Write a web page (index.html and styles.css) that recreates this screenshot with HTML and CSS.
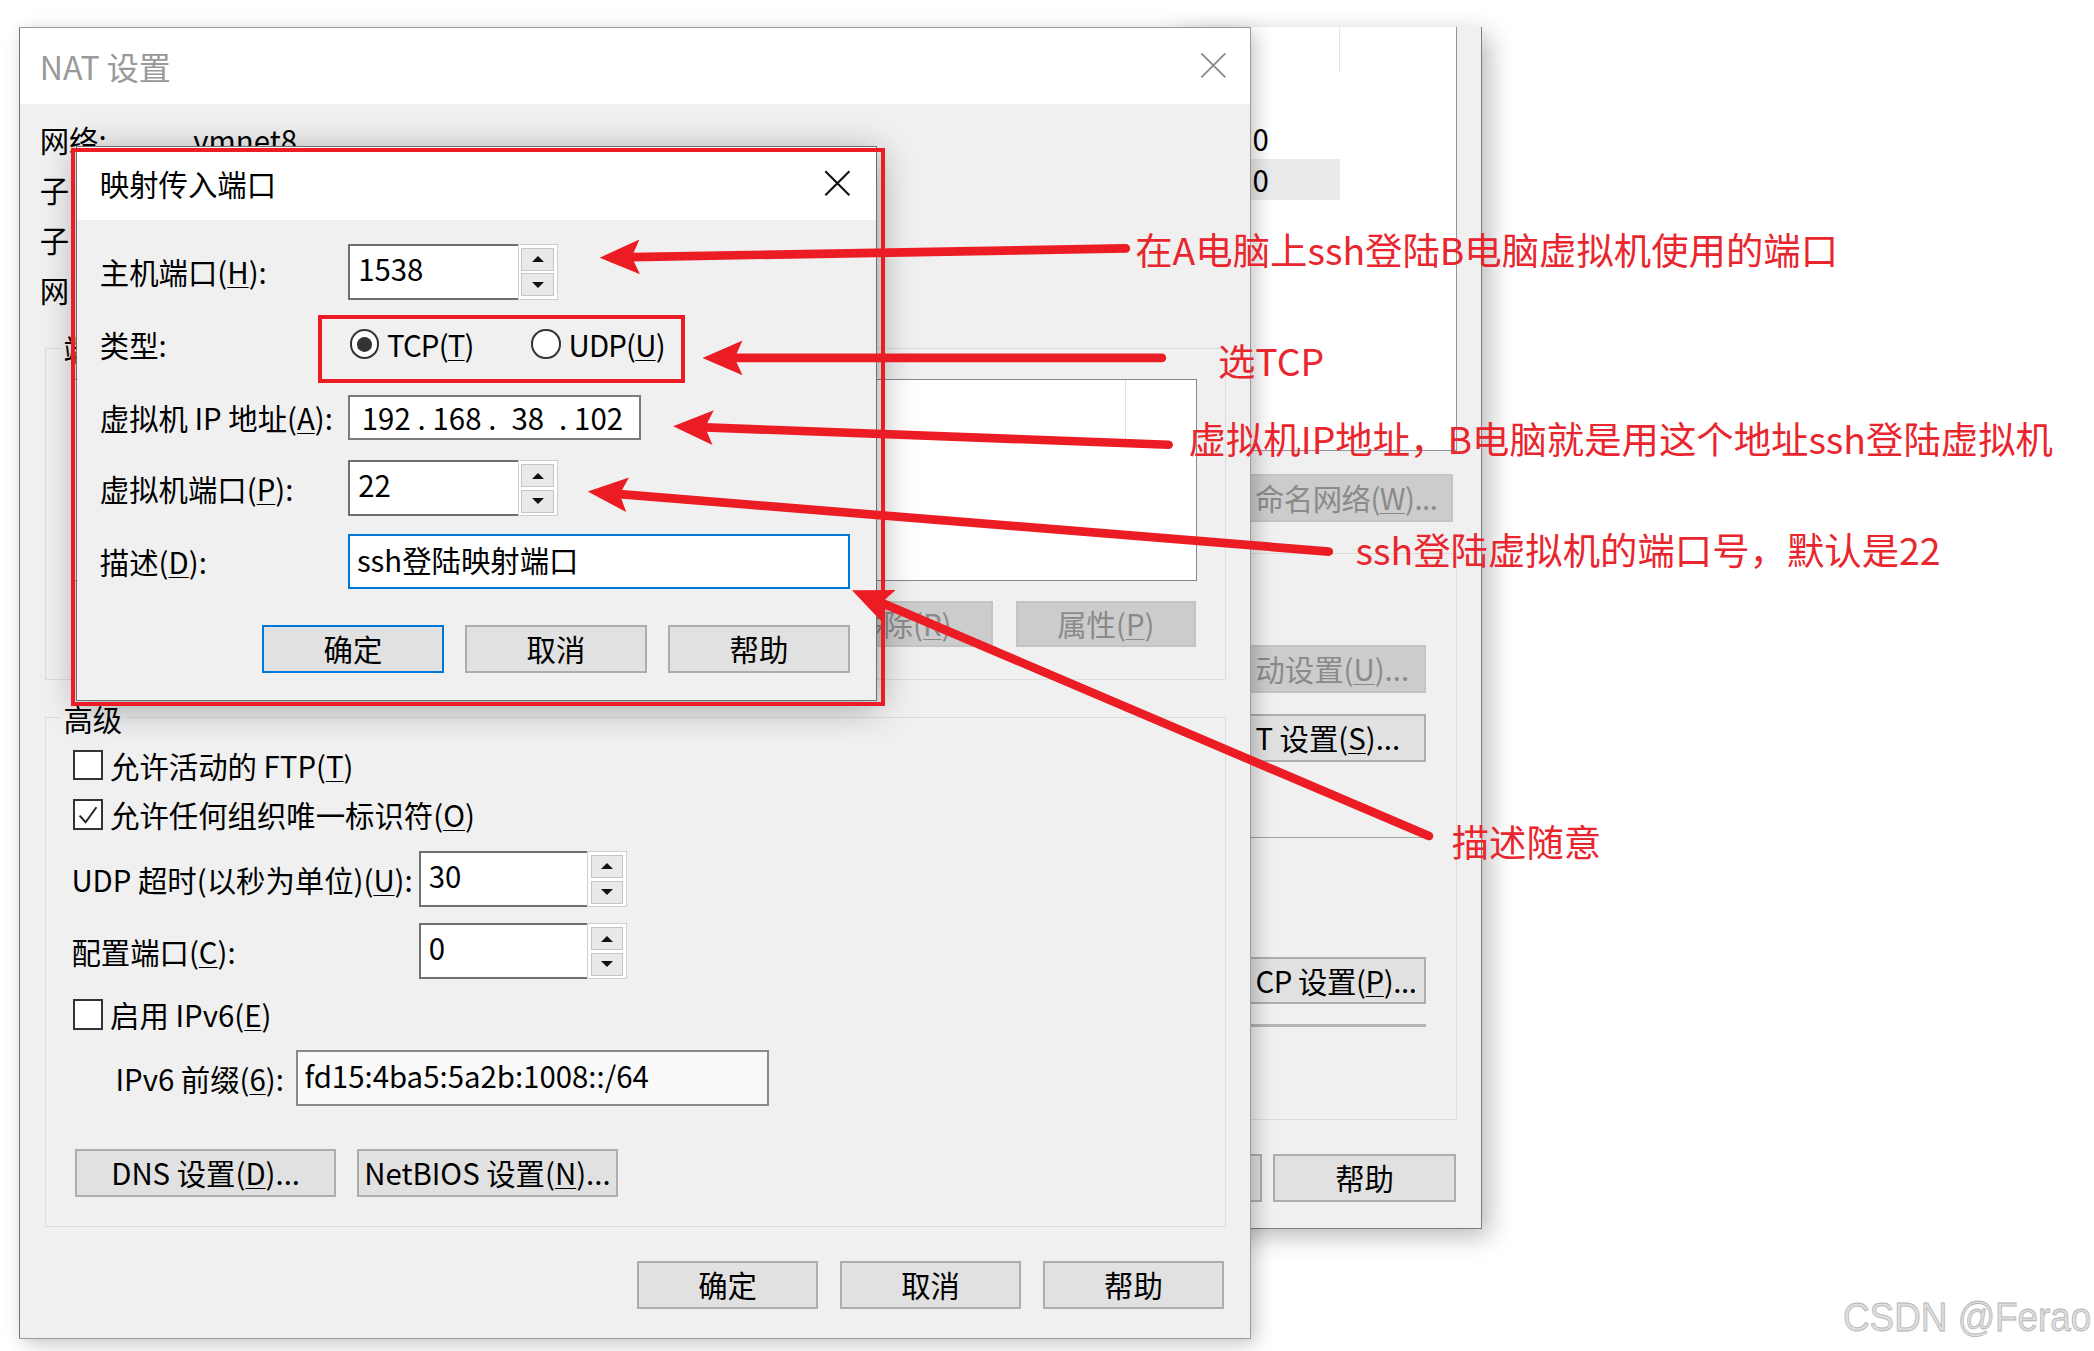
FILE: index.html
```html
<!DOCTYPE html>
<html lang="zh-CN">
<head>
<meta charset="utf-8">
<title>NAT 设置 - 映射传入端口</title>
<link rel="stylesheet" href="styles.css">
</head>
<body>
<div class="stage">

  <section class="win vne">
    <div class="vne-list">
      <div class="vne-head"><div class="vne-hcell"></div></div>
      <div class="vne-row r-first"><div class="vne-cell"><span class="vne-txt">0</span></div></div>
      <div class="vne-row sel"><div class="vne-cell"><span class="vne-txt">0</span></div></div>
    </div>
    <div class="vne-rename"><button class="btn dis b-rename">命名网络(<u>W</u>)...</button></div>
    <div class="vne-group">
      <button class="btn dis vbtn b-auto">动设置(<u>U</u>)...</button>
      <button class="btn vbtn b-nat">T 设置(<u>S</u>)...</button>
      <div class="vne-sep s1"></div>
      <button class="btn vbtn b-dhcp">CP 设置(<u>P</u>)...</button>
      <div class="vne-sep s2"></div>
    </div>
    <div class="vne-foot">
      <button class="btn vf" aria-label="应用"></button>
      <button class="btn vf">帮助</button>
    </div>
  </section>

  <section class="win nat">
    <header class="titlebar nat-title">
      <span class="ttl">NAT 设置</span>
      <svg class="x" viewBox="0 0 20 20" width="20" height="20"><path d="M1 1L19 19M19 1L1 19" stroke="#8a8a8a" stroke-width="1.4" fill="none"/></svg>
    </header>
    <div class="nat-body">
      <div class="info">
        <div class="info-row"><span class="info-k">网络:</span><span class="info-v">vmnet8</span></div>
        <div class="info-row"><span class="info-k">子</span></div>
        <div class="info-row"><span class="info-k">子</span></div>
        <div class="info-row"><span class="info-k">网</span></div>
      </div>

      <fieldset class="grp grp-pf">
        <legend>端</legend>
        <div class="listbox"><div class="lb-head"><div class="lb-hcell"></div></div></div>
        <div class="pf-btns">
          <button class="btn pf" aria-label="添加"></button>
          <button class="btn pf dis">移除(<u>R</u>)</button>
          <button class="btn pf dis">属性(<u>P</u>)</button>
        </div>
      </fieldset>

      <fieldset class="grp grp-adv">
        <legend>高级</legend>
        <div class="cb-row r-ftp"><span class="cb"></span><span>允许活动的 FTP(<u>T</u>)</span></div>
        <div class="cb-row r-oui"><span class="cb"><svg viewBox="0 0 20 20" width="18" height="18"><path d="M3 10.5L8 16L17 3.5" stroke="#222" stroke-width="1.6" fill="none"/></svg></span><span>允许任何组织唯一标识符(<u>O</u>)</span></div>
        <div class="f-row r-udp">
          <span class="f-lbl">UDP 超时(以秒为单位)(<u>U</u>):</span>
          <div class="spin s-adv"><span class="spin-in">30</span><span class="spin-bs"><span class="sb up"></span><span class="sb dn"></span></span></div>
        </div>
        <div class="f-row r-cfg">
          <span class="f-lbl">配置端口(<u>C</u>):</span>
          <div class="spin s-adv"><span class="spin-in">0</span><span class="spin-bs"><span class="sb up"></span><span class="sb dn"></span></span></div>
        </div>
        <div class="cb-row r-v6"><span class="cb"></span><span>启用 IPv6(<u>E</u>)</span></div>
        <div class="f-row r-pfx">
          <span class="pfx-lbl">IPv6 前缀(<u>6</u>):</span>
          <div class="field pfx">fd15:4ba5:5a2b:1008::/64</div>
        </div>
        <div class="adv-btns">
          <button class="btn adv">DNS 设置(<u>D</u>)...</button>
          <button class="btn adv">NetBIOS 设置(<u>N</u>)...</button>
        </div>
      </fieldset>

      <div class="dlg-btns nat-btns">
        <button class="btn db">确定</button>
        <button class="btn db">取消</button>
        <button class="btn db">帮助</button>
      </div>
    </div>
  </section>

  <section class="win map">
    <header class="titlebar map-title">
      <span class="ttl">映射传入端口</span>
      <svg class="x" viewBox="0 0 20 20" width="20" height="20"><path d="M1 1L19 19M19 1L1 19" stroke="#111" stroke-width="1.6" fill="none"/></svg>
    </header>
    <div class="map-body">
      <div class="m-row m1">
        <span class="m-lbl">主机端口(<u>H</u>):</span>
        <div class="spin"><span class="spin-in">1538</span><span class="spin-bs"><span class="sb up"></span><span class="sb dn"></span></span></div>
      </div>
      <div class="m-row m2">
        <span class="m-lbl">类型:</span>
        <div class="radios">
          <div class="rd"><span class="rc on"></span><span class="rt">TCP(<u>T</u>)</span></div>
          <div class="rd"><span class="rc"></span><span class="rt">UDP(<u>U</u>)</span></div>
        </div>
      </div>
      <div class="m-row m3">
        <span class="m-lbl">虚拟机 IP 地址(<u>A</u>):</span>
        <div class="field ip"><span class="oct">192</span><span class="dot">.</span><span class="oct">168</span><span class="dot">.</span><span class="oct">38</span><span class="dot">.</span><span class="oct">102</span></div>
      </div>
      <div class="m-row m4">
        <span class="m-lbl">虚拟机端口(<u>P</u>):</span>
        <div class="spin"><span class="spin-in">22</span><span class="spin-bs"><span class="sb up"></span><span class="sb dn"></span></span></div>
      </div>
      <div class="m-row m5">
        <span class="m-lbl">描述(<u>D</u>):</span>
        <div class="field desc">ssh登陆映射端口</div>
      </div>
      <div class="dlg-btns map-btns">
        <button class="btn db2 def">确定</button>
        <button class="btn db2">取消</button>
        <button class="btn db2">帮助</button>
      </div>
    </div>
  </section>

  <div class="hl hl-map"></div>
  <div class="hl hl-type"></div>

  <svg class="arrows" viewBox="0 0 1568 1012" width="1568" height="1012">
    <defs>
      <marker id="ah" markerUnits="userSpaceOnUse" markerWidth="32" markerHeight="28" refX="6" refY="13" orient="auto">
        <path d="M0,0 L30,13 L0,26 L6,13 z" fill="#ec1c24"/>
      </marker>
    </defs>
    <g stroke="#ec1c24" stroke-width="6.5" stroke-linecap="round" fill="none">
      <line x1="843" y1="186" x2="473" y2="192.5" marker-end="url(#ah)"/>
      <line x1="870" y1="268" x2="550" y2="268" marker-end="url(#ah)"/>
      <line x1="875" y1="333" x2="528" y2="320" marker-end="url(#ah)"/>
      <line x1="995" y1="413" x2="464" y2="370" marker-end="url(#ah)"/>
      <line x1="1070" y1="626" x2="660" y2="451.4" marker-end="url(#ah)"/>
    </g>
  </svg>

  <div class="note n1">在A电脑上ssh登陆B电脑虚拟机使用的端口</div>
  <div class="note n2">选TCP</div>
  <div class="note n3">虚拟机IP地址，B电脑就是用这个地址ssh登陆虚拟机</div>
  <div class="note n4">ssh登陆虚拟机的端口号，默认是22</div>
  <div class="note n5">描述随意</div>

  <div class="wm">CSDN @Ferao</div>
</div>
</body>
</html>
```

FILE: styles.css
```css
* { box-sizing: border-box; }
html, body { margin: 0; padding: 0; background: #fff; }
body {
  font-family: "Noto Sans CJK SC", "Noto Sans", "Liberation Sans", sans-serif;
  color: #000;
}
.stage {
  zoom: 1.3355;
  position: relative;
  width: 1568px;
  height: 1012px;
  overflow: hidden;
  font-size: 22px;
  line-height: 1.2;
}
u { text-decoration-thickness: 1px; text-underline-offset: 2px; }

.win { position: absolute; }

.btn {
  font: inherit;
  color: #000;
  margin: 0;
  padding: 0;
  background: #e1e1e1;
  border: 1.5px solid #adadad;
  display: flex;
  align-items: center;
  justify-content: center;
  white-space: nowrap;
  line-height: 1;
  flex: none;
}
.btn.dis { background: #cccccc; border-color: #c4c4c4; color: #8a8a8a; }

/* ---------- back window (virtual network editor) ---------- */
.vne {
  left: 880px; top: 20px; width: 230px; height: 900px;
  background: #f0f0f0;
  border-right: 1px solid #7d7d7d;
  border-bottom: 1px solid #7d7d7d;
  box-shadow: 6px 6px 18px rgba(0,0,0,.28);
  padding-right: 18px;
  display: flex; flex-direction: column;
}
.vne-list {
  height: 318px; flex: none;
  background: #fff;
  border-right: 1px solid #8e96a3;
  border-bottom: 1px solid #8e96a3;
  display: flex; flex-direction: column;
}
.vne-head { height: 35px; flex: none; }
.vne-hcell { width: 123px; height: 35px; border-right: 1px solid #e3e3e3; }
.vne-row { height: 31px; flex: none; }
.vne-row.r-first { margin-top: 33px; }
.vne-cell { width: 123px; height: 31px; display: flex; }
.vne-row.sel .vne-cell { background: #ebebeb; }
.vne-txt {
  width: 70px; height: 31px;
  display: flex; justify-content: flex-end; align-items: center;
  white-space: nowrap;
}
.vne-rename { margin-top: 17px; display: flex; justify-content: flex-end; padding-right: 3px; flex: none; }
.b-rename { width: 179px; height: 36px; justify-content: flex-start; padding-left: 29px; letter-spacing: -0.4px; }
.vne-group {
  margin-top: 23px; height: 425px; flex: none;
  border-top: 1px solid #dcdcdc;
  border-right: 1px solid #dcdcdc;
  border-bottom: 1px solid #dcdcdc;
  display: flex; flex-direction: column; align-items: flex-end;
  padding-right: 23px;
}
.vbtn { width: 172px; height: 36px; justify-content: flex-start; padding-left: 43px; }
.b-auto { margin-top: 68px; }
.b-nat { margin-top: 16px; }
.b-dhcp { margin-top: 89px; height: 35px; letter-spacing: -0.3px; }
.vne-sep { width: 220px; flex: none; }
.s1 { margin-top: 56px; height: 1px; background: #a3a3a3; }
.s2 { margin-top: 15px; height: 2px; background: #b4b4b4; }
.vne-foot { margin-top: 25px; display: flex; justify-content: flex-end; gap: 8px; padding-right: 1px; flex: none; }
.vf { width: 137px; height: 36px; }

/* ---------- NAT settings window ---------- */
.nat {
  left: 14px; top: 20px; width: 923px; height: 983px;
  background: #f0f0f0;
  border: 1px solid #9b9b9b;
  border-left-color: #777;
  box-shadow: 4px 4px 14px rgba(0,0,0,.25);
  display: flex; flex-direction: column;
}
.titlebar {
  background: #fff;
  display: flex; align-items: center; justify-content: space-between;
  flex: none;
}
.nat-title { height: 57px; padding: 0 18px 0 15px; }
.nat .ttl { color: #999; font-size: 24px; }
.x { display: block; flex: none; }
.nat-body { padding-top: 8px; display: flex; flex-direction: column; }
.info-row { height: 37.5px; padding-left: 15px; display: flex; align-items: center; white-space: nowrap; }
.info-k { width: 115px; flex: none; }

.grp {
  margin: 0 18px 0 19px;
  border: 1px solid #dcdcdc;
  min-width: 0;
  display: flex; flex-direction: column;
}
.grp legend {
  padding: 0 2px;
  font-size: 22px;
  line-height: 24px;
  height: 24px;
  white-space: nowrap;
}
.grp-pf { margin-top: 13px; padding: 0 21px 24px; }
.grp-pf legend { margin-left: -10px; }
.listbox {
  margin-top: 11px; height: 151px;
  background: #fff;
  border: 1px solid #828790;
}
.lb-head { height: 46px; }
.lb-hcell { width: 787px; height: 46px; border-right: 1px solid #e3e3e3; }
.pf-btns { margin-top: 15px; display: flex; justify-content: flex-end; gap: 17px; padding-right: 1px; }
.pf { width: 135px; height: 35px; }

.grp-adv { margin-top: 16px; padding: 0 20px 22px 19px; }
.grp-adv legend { margin-left: -8px; }
.cb-row { display: flex; align-items: center; gap: 5px; height: 37px; white-space: nowrap; }
.cb {
  width: 23px; height: 23px; flex: none;
  margin-left: 1px;
  border: 1.5px solid #333;
  background: #fff;
  display: flex; align-items: center; justify-content: center;
}
.r-ftp { margin-top: 5px; }
.f-row { display: flex; align-items: center; white-space: nowrap; }
.f-lbl { width: 260px; flex: none; }
.r-udp { margin-top: 9px; height: 42px; }
.r-cfg { margin-top: 12px; height: 42px; }
.r-v6 { margin-top: 8px; }
.r-pfx { margin-top: 8px; height: 42px; }
.pfx-lbl { margin-left: 33px; width: 135px; flex: none; }
.field {
  background: #fff;
  border: 1.5px solid #7a7a7a;
  display: flex; align-items: center;
  white-space: nowrap;
}
.pfx { width: 354px; height: 42px; padding-left: 5px; padding-bottom: 4px; background: #f9f9f9; border-color: #8a8a8a; }
.adv-btns { margin-top: 32px; margin-left: 3px; display: flex; gap: 16px; }
.adv { width: 195px; height: 36px; }

.dlg-btns { display: flex; justify-content: flex-end; }
.nat-btns { margin-top: 25px; gap: 17px; padding-right: 20px; }
.db { width: 135px; height: 36px; }

/* ---------- spinner ---------- */
.spin { display: flex; width: 157px; height: 42px; flex: none; }
.spin.s-adv { width: 156px; }
.spin-in {
  flex: 1;
  background: #fff;
  border: 1.5px solid #6f6f6f;
  border-right: none;
  padding: 0 6px 5px;
  display: flex; align-items: center;
}
.spin-bs {
  width: 30px; flex: none;
  border: 1px solid #cfcfcf;
  background: #fff;
  display: flex; flex-direction: column;
  padding: 2px; gap: 2px;
}
.sb {
  flex: 1;
  background: #e9e9e9;
  border: 1px solid #c4c4c4;
  display: flex; align-items: center; justify-content: center;
}
.sb.up::after {
  content: "";
  border-left: 4.5px solid transparent;
  border-right: 4.5px solid transparent;
  border-bottom: 5px solid #111;
}
.sb.dn::after {
  content: "";
  border-left: 4.5px solid transparent;
  border-right: 4.5px solid transparent;
  border-top: 5px solid #111;
}

/* ---------- 映射传入端口 window ---------- */
.map {
  left: 57px; top: 109px; width: 600px; height: 416px;
  background: #f0f0f0;
  border: 1px solid #6e6e6e;
  box-shadow: 2px 5px 26px rgba(0,0,0,.35);
  display: flex; flex-direction: column;
}
.map-title { height: 55px; padding: 0 19px 0 17px; }
.map .ttl { color: #000; font-size: 22px; }
.map-body { padding-left: 17px; display: flex; flex-direction: column; }
.m-row { display: flex; align-items: center; white-space: nowrap; flex: none; }
.m-lbl { width: 186px; flex: none; }
.m1 { margin-top: 18px; height: 42px; }
.m2 { margin-top: 12px; height: 42px; }
.m3 { margin-top: 17px; height: 34px; }
.m4 { margin-top: 15px; height: 42px; }
.m5 { margin-top: 13px; height: 41px; }
.radios { display: flex; margin-left: 1px; }
.rd { display: flex; align-items: center; gap: 6px; }
.rd:first-child { width: 136px; }
.rt { letter-spacing: -0.6px; }
.rc {
  width: 22px; height: 22px; flex: none;
  border-radius: 50%;
  border: 1.5px solid #333;
  background: #fff;
  display: flex; align-items: center; justify-content: center;
}
.rc.on::after { content: ""; width: 11px; height: 11px; border-radius: 50%; background: #333; }
.ip { width: 219px; height: 34px; padding-left: 5px; }
.ip .oct { width: 44px; text-align: center; }
.ip .dot { width: 9px; text-align: center; }
.desc { width: 376px; height: 41px; padding-left: 5px; padding-bottom: 3px; border-color: #0078d7; }
.map-btns { margin-top: 27px; gap: 16px; padding-right: 20px; }
.db2 { width: 136px; height: 36px; }
.btn.def { border: 2px solid #0078d7; }

/* ---------- annotations ---------- */
.hl { position: absolute; border: 3.5px solid #ec1c24; }
.hl-map { left: 53px; top: 111px; width: 610px; height: 418px; }
.hl-type { left: 238px; top: 236px; width: 275px; height: 51px; }
.arrows { position: absolute; left: 0; top: 0; pointer-events: none; }
.note {
  position: absolute;
  color: #e9262e;
  font-size: 28px;
  line-height: 32px;
  white-space: nowrap;
}
.n1 { left: 850px; top: 171px; }
.n2 { left: 912px; top: 254px; }
.n3 { left: 890px; top: 312px; }
.n4 { left: 1015px; top: 395px; }
.n5 { left: 1087px; top: 614px; }
.wm {
  position: absolute;
  left: 1380px; top: 970px;
  font-family: "Liberation Sans", Arial, sans-serif;
  font-size: 30px;
  line-height: 34px;
  color: #dedede;
  -webkit-text-stroke: 0.6px #b4b4b4;
  transform: scaleX(0.92);
  transform-origin: 0 50%;
  white-space: nowrap;
}
```
